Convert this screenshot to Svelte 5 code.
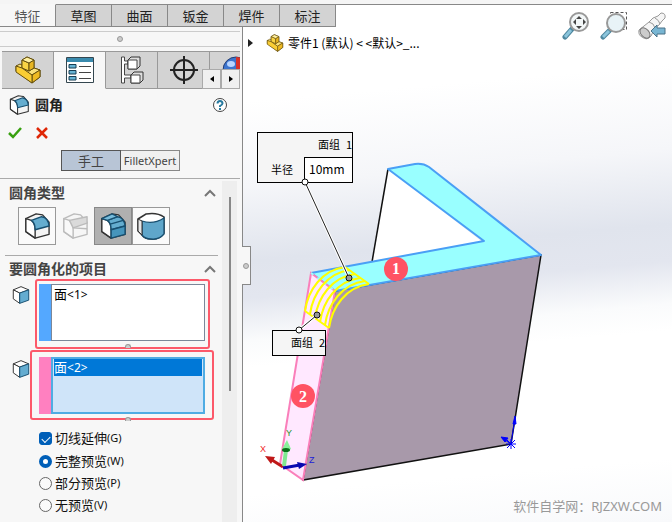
<script lang="ts">
  type CubeKind = "title" | "constant" | "variable" | "face" | "round" | "side";

  const ribbon = ["特征", "草图", "曲面", "钣金", "焊件", "标注"];
  const managers = ["part", "list", "config", "target", "display"];
  const types: { kind: CubeKind; label: string }[] = [
    { kind: "constant", label: "恒定大小圆角" },
    { kind: "variable", label: "变量大小圆角" },
    { kind: "face", label: "面圆角" },
    { kind: "round", label: "完整圆角" },
  ];
  const previews = [
    { value: "full", text: "完整预览", key: "(W)" },
    { value: "partial", text: "部分预览", key: "(P)" },
    { value: "none", text: "无预览", key: "(V)" },
  ];
  const strands = [[0, 0], [5, 3], [10, 7], [15, 11], [20, 14], [24, 17]];

  let activeRibbon = $state("特征");
  let activeManager = $state("list");
  let activeType = $state<CubeKind>("face");
  let tangent = $state(true);
  let preview = $state("full");
</script>

{#snippet part(size: number)}
  <svg width={size} height={size} viewBox="0 0 28 28" aria-hidden="true">
    <g stroke="#65500f" stroke-linejoin="round">
      <path d="M8 4 13 1 20 4 20 12 26 14 26 21 18 27 2 15 2 10 8 12Z" fill="#f6c62b" />
      <path d="M2 10 6 8 8 9V12L15 15 20 12 26 14 18 19Z" fill="#fbe27a" />
      <path d="M18 19V27L26 21V14Z" fill="#efba22" />
      <path d="M8 4V12L15 15V7Z" fill="#f9d445" />
      <path d="M15 7 20 4V12L15 15Z" fill="#e7b521" />
      <path d="M8 4 13 1 20 4 15 7Z" fill="#fff0a0" />
      <path d="M2 10V16L18 27V19L8 12Z" fill="#f9cd35" />
    </g>
  </svg>
{/snippet}

{#snippet cube(kind: CubeKind, size: number)}
  <svg class:faded={kind === "variable"} width={size} height={size} viewBox="0 0 28 28" aria-hidden="true">
    {#if kind === "round"}
      <path d="M1 7 9 2Q20 0 27 5V21Q22 28 14 27 8 27 5 23L1 19Z" fill="#fff" stroke="#333" stroke-width="1.5" />
      <path d="M5 9Q16 13 27 6V22Q22 28 14 27 8 27 5 23Z" fill="#5fa6ca" stroke="#174f70" stroke-width="1.3" />
      <path d="M5 9 1 7V19L5 23Z" fill="#e8e8e8" stroke="#333" />
    {:else if kind === "side"}
      <g stroke="#333" stroke-width="1.5" stroke-linejoin="round">
        <path d="M2 6 14 1 26 6 12 11Z" fill="#fff" />
        <path d="M2 6V20L12 27V11Z" fill="#fff" />
        <path d="M12 11V27L26 22V6Z" fill="#64acd0" stroke="#174f70" />
      </g>
    {:else}
      <g stroke="#333" stroke-width="1.5" stroke-linejoin="round">
        <path d="M2 6 13 1 20 2 27 10V23L12 27 2 20Z" fill="#f4f4f4" />
        <path d="M2 6V20L12 27V18Q12 11 8 8Z" fill="#fff" />
        {#if kind === "variable"}
          <path d="M8 8 27 4V11L12 16Z" fill="#999" />
          <path d="M12 16 27 17" />
        {:else}
          <path d="M8 8 19 4Q26 5 27 14L12 18Q12 11 8 8Z" fill="#65adcf" stroke="#174f70" />
          {#if kind === "face"}
            <path d="M12 18 27 14V23L12 27Z" fill="#4695bc" stroke="#174f70" />
            <path d="M2 6 13 1 19 4 8 8Z" fill="#79bddc" stroke="#174f70" />
            <path d="M11 12 25 8" stroke="#174f70" />
          {/if}
        {/if}
      </g>
    {/if}
  </svg>
{/snippet}

{#snippet managerIcon(name: string)}
  {#if name === "part"}
    {@render part(28)}
  {:else if name === "list"}
    <svg width="28" height="28" viewBox="0 0 28 28" aria-hidden="true">
      <path d="M.5 1.5H27.5V26.5H.5Z" fill="#fff" stroke="#34464f" />
      <path d="M1 2H27V6H1Z" fill="#398aad" />
      <path d="M3 8.500H10V12H3ZM3 14.500H10V18H3ZM3 20.500H10V24H3Z" fill="#65b2d3" stroke="#173d52" />
      <path d="M13 10.500H25M13 16.500H25M13 22.500H25" stroke="#444" />
    </svg>
  {:else if name === "config"}
    <svg width="28" height="28" viewBox="0 0 28 28" aria-hidden="true">
      <path d="M3.500 1V27H6.500V22H13V19H6.500V8H10V5H6.500V1Z" fill="#fff" stroke="#444" />
      <path d="M10 4 13 1H22V10L19 13H10ZM13 19 16 16H25V24L22 27H13Z" fill="#ddd" stroke="#333" />
      <path d="M10 4H19V13H10ZM13 19H22V27H13Z" fill="#fff" stroke="#444" />
    </svg>
  {:else if name === "target"}
    <svg width="28" height="28" viewBox="0 0 28 28" aria-hidden="true">
      <circle cx="14" cy="14" r="10" fill="none" stroke="#222" stroke-width="2" />
      <path d="M14 0V28M0 14H28" stroke="#222" stroke-width="2" />
    </svg>
  {:else}
    <svg width="28" height="28" viewBox="0 0 28 28" aria-hidden="true">
      <circle cx="14" cy="14" r="13" fill="#3c74ce" stroke="#243c70" />
      <path d="M14 14V1A13 13 0 0 1 27 14Z" fill="#d83128" />
      <ellipse cx="9" cy="8" rx="4" ry="3" fill="#b9d5ff" />
    </svg>
  {/if}
{/snippet}

{#snippet chevron()}
  <svg width="12" height="8" viewBox="0 0 12 8" aria-hidden="true">
    <path d="M1 7 6 2 11 7" fill="none" stroke="#777" stroke-width="2" />
  </svg>
{/snippet}

<div class="app">
  <header>
    <nav class="ribbon">
      {#each ribbon as name}
        <button class:active={activeRibbon === name} type="button" onclick={() => (activeRibbon = name)}>{name}</button>
      {/each}
    </nav>
    <div class="ribbon-rest"></div>
  </header>

  <main>
    <aside>
      <div class="grip"><i></i></div>
      <div class="managers">
        {#each managers as name}
          <button class:active={activeManager === name} type="button" aria-label={name} onclick={() => (activeManager = name)}>
            {@render managerIcon(name)}
          </button>
        {/each}
        <div class="pager">
          <button type="button" aria-label="向左"><svg width="4" height="6" viewBox="0 0 4 6"><path d="M4 0V6L0 3Z" /></svg></button>
          <button type="button" aria-label="向右"><svg width="4" height="6" viewBox="0 0 4 6"><path d="M0 0V6L4 3Z" /></svg></button>
        </div>
      </div>

      <div class="title">
        {@render cube("title", 20)}
        <h1>圆角</h1>
        <button class="plain" type="button" aria-label="帮助">
          <svg width="16" height="16" viewBox="0 0 16 16" aria-hidden="true">
            <circle cx="8" cy="8" r="6.500" fill="#fff" stroke="#444" />
            <path d="M5.500 6.500Q5.500 4 8 4T10.500 6.500Q10.500 7.500 8 9V10" fill="none" stroke="#287a9f" stroke-width="2" />
            <path d="M7 11H9V13H7Z" fill="#287a9f" />
          </svg>
        </button>
      </div>
      <div class="confirm">
        <button class="plain" type="button" aria-label="确定">
          <svg width="16" height="14" viewBox="0 0 16 14"><path d="M2 7 6 11 14 2" fill="none" stroke="#38a010" stroke-width="2.500" /></svg>
        </button>
        <button class="plain" type="button" aria-label="取消">
          <svg width="12" height="12" viewBox="0 0 12 12"><path d="M1 1 11 11M11 1 1 11" fill="none" stroke="#df2707" stroke-width="2.500" /></svg>
        </button>
      </div>
      <div class="mode">
        <button class="manual" type="button">手工</button>
        <button type="button">FilletXpert</button>
      </div>

      <div class="scroller">
        <div class="sections">
          <section>
            <h2>圆角类型 {@render chevron()}</h2>
            <div class="types">
              {#each types as type}
                <button
                  class:active={activeType === type.kind}
                  class:flat={type.kind === "variable"}
                  type="button"
                  aria-label={type.label}
                  onclick={() => (activeType = type.kind)}
                >
                  {@render cube(type.kind, type.kind === "round" ? 28 : 26)}
                </button>
              {/each}
            </div>
          </section>
          <section>
            <h2>要圆角化的项目 {@render chevron()}</h2>
            <div class="pick">
              {@render cube("side", 18)}
              <div class="frame">
                <div class="field blue">
                  <ul aria-label="面组 1"><li>面<small>&lt;1&gt;</small></li></ul>
                </div>
                <i></i>
              </div>
            </div>
            <div class="pick second">
              {@render cube("side", 18)}
              <div class="frame">
                <div class="field pink">
                  <ul aria-label="面组 2"><li>面<small>&lt;2&gt;</small></li></ul>
                </div>
                <i></i>
              </div>
            </div>
            <div class="options">
              <label class="tangent"><input type="checkbox" bind:checked={tangent} />切线延伸<small>(G)</small></label>
              {#each previews as option}
                <label><input type="radio" name="preview" value={option.value} bind:group={preview} />{option.text}<small>{option.key}</small></label>
              {/each}
            </div>
          </section>
        </div>
        <div class="track"><div class="thumb"></div></div>
      </div>
    </aside>

    <div class="viewport">
      <svg class="scene" viewBox="243 27 429 495" preserveAspectRatio="xMinYMin meet">
        <path d="M388 169 484 243 311 273 372 262Z" fill="#fff" />
        <path d="M388 169 372 262" stroke="#111" stroke-width="1.500" />
        <path d="M335 291 541 255 511 444 303 480Z" fill="#a899aa" stroke="#111" stroke-width="1.500" />
        <path d="M388 169 415 164Q423 163 429 167L541 255 335 291 311 273 484 241Z" fill="#99ffff" stroke="#4a9ff5" stroke-width="2" stroke-linejoin="round" />
        <path d="M311 273 335 291 303 480 280 464Z" fill="#ffe8ff" stroke="#fa7fba" stroke-width="2" />
        <path d="M311 273 335 291" stroke="#99ffff" stroke-width="2" stroke-dasharray="3 5" />
        <g fill="none" stroke="#ff0" stroke-width="2">
          {#each strands as [x, y]}
            <path d="M{305 + x} {311 + y}C{308 + x} {290 + y} {322 + x} {270 + y} {345 + x} {267 + y}" />
          {/each}
          <path d="M305 311 329 328M345 267 369 284" />
        </g>

        <path d="M305 182 349 278M299 330 317 315" stroke="#fff" stroke-width="3" />
        <path d="M305 182 349 278M299 330 317 315" stroke="#222" />
        <g stroke="#000" shape-rendering="crispEdges">
          <path d="M257.500 132.500H352.500V182.500H257.500Z" fill="#f5f5f5" />
          <path d="M304.500 157.500H352.500V182.500H304.500Z" fill="#fff" />
          <path d="M272.500 330.500H325.500V355.500H272.500Z" fill="#f5f5f5" />
        </g>
        <g stroke="#111">
          <circle cx="305" cy="182" r="3" fill="#fff" />
          <circle cx="299" cy="330" r="3" fill="#fff" />
          <circle cx="349" cy="278" r="3" fill="#999" />
          <circle cx="317" cy="315" r="3" fill="#999" />
        </g>
        <g class="callout">
          <text x="318" y="149">面组</text><text x="346" y="149">1</text>
          <text x="271" y="174">半径</text><text class="value" x="309" y="174">10mm</text>
          <text x="291" y="347">面组</text><text x="319" y="347">2</text>
        </g>
        <g class="badge">
          <circle cx="396" cy="269" r="12" /><text x="396" y="274">1</text>
          <circle cx="303" cy="396" r="12" /><text x="303" y="402">2</text>
        </g>

        <g class="axes">
          <path d="M283 467 272 460" stroke="#c01818" stroke-width="3" />
          <path d="M265 456 275 457 271 464Z" fill="#c01818" />
          <path d="M284 466 286 450" stroke="#80e890" stroke-width="4" />
          <path d="M287 440 291 449Q286 453 282 449Z" fill="#88f09a" />
          <ellipse cx="286" cy="450" rx="4" ry="2" fill="#087018" />
          <path d="M283 468 300 465" stroke="#0808b0" stroke-width="3" />
          <path d="M307 464 297 462 299 469Z" fill="#0808b0" />
          <text x="260" y="452" fill="#f02828">X</text>
          <text x="286" y="436" fill="#279227">Y</text>
          <text x="309" y="463" fill="#2020d8">Z</text>
        </g>
        <g stroke="#00f">
          <path d="M506 444H516M511 439V449M507 440 515 448M515 440 507 448M511 444 515 418M511 444 502 438" />
          <path d="M515 416 516 424H513ZM501 437 508 438 505 442Z" fill="#00f" />
        </g>
      </svg>

      <div class="viewbar">
        <div class="tree">
          <svg width="5" height="8" viewBox="0 0 5 8"><path d="M0 0V8L5 4Z" fill="#222" /></svg>
          {@render part(18)}
          <span>零件1 (默认) &lt; &lt;默认&gt;_...</span>
        </div>
        <div class="tools">
          <button class="plain" type="button" aria-label="整屏显示全图">
            <svg width="28" height="28" viewBox="0 0 28 28">
              <path d="M10 17 3 25" stroke="#4e879f" stroke-width="5" stroke-linecap="round" /><path d="M9 18 3 25" stroke="#8bc5dc" stroke-width="3" />
              <circle cx="17" cy="10" r="9" fill="#f3f7f8" stroke="#999" stroke-width="2" />
              <path d="M17 4 20 7H14ZM17 17 14 14H20ZM11 10 14 7V13ZM24 10 21 13V7Z" fill="#444" />
            </svg>
          </button>
          <button class="plain" type="button" aria-label="局部放大">
            <svg width="28" height="28" viewBox="0 0 28 28">
              <path d="M10.500 .5H26.500V17.500H10.500Z" fill="none" stroke="#555" stroke-dasharray="3 2" />
              <path d="M10 18 3 25" stroke="#4e879f" stroke-width="5" stroke-linecap="round" /><path d="M9 19 3 25" stroke="#8bc5dc" stroke-width="3" />
              <circle cx="16" cy="11" r="9" fill="#e8f3f7" stroke="#999" stroke-width="2" />
            </svg>
          </button>
          <button class="plain" type="button" aria-label="上一视图">
            <svg width="28" height="28" viewBox="0 0 28 28">
              <path d="M1 18 11 10 15 6 20 4 23 1Q28 1 27 6L24 9 21 13 17 16 13 24Q9 29 4 25 0 23 1 18Z" fill="#f5f5f5" stroke="#999" />
              <path d="M11 10Q16 11 17 16M17 6Q21 8 22 12" fill="none" stroke="#999" />
              <ellipse cx="7" cy="21" rx="4" ry="6" transform="rotate(-42 7 21)" fill="#ccc" stroke="#777" />
              <path d="M13 19 19 13V16H27V22H19V25Z" fill="#78b5d2" stroke="#4b7187" />
            </svg>
          </button>
        </div>
      </div>
      <div class="splitter"><i></i></div>
      <p class="credit">软件自学网：RJZXW.COM</p>
    </div>
  </main>
</div>

<style>
  :global(body) {
    background: #f7f7f7;
  }

  .app {
    display: flex;
    flex-direction: column;
    min-height: 100vh;
    color: #222;
    font: 13px/16px "Noto Sans", "Noto Sans CJK SC", sans-serif;
  }

  .app * {
    box-sizing: border-box;
  }

  svg {
    display: block;
    flex: none;
  }

  button {
    margin: 0;
    padding: 0;
    color: inherit;
    font: inherit;
  }

  .plain {
    border: 0;
    background: none;
  }

  header {
    display: flex;
    height: 27px;
    padding-top: 4px;
    background: #f5f5f5;
  }

  .ribbon {
    display: flex;
  }

  .ribbon button {
    width: 56px;
    border: 1px solid #888;
    border-left: 0;
    background: #d3d3d3;
  }

  .ribbon button.active {
    border-top-color: transparent;
    background: #f7f7f7;
    color: #555;
  }

  .ribbon-rest {
    flex: 1;
    border-top: 1px solid #888;
    background: #fff;
  }

  main {
    display: flex;
    flex: 1;
  }

  aside {
    display: flex;
    flex: none;
    flex-direction: column;
    width: 243px;
    border-right: 1px solid #888;
    background: #f7f7f7;
  }

  i {
    display: block;
    width: 6px;
    height: 6px;
    border: 1px solid #999;
    border-radius: 50%;
    background: #ccc;
  }

  .grip {
    display: grid;
    height: 16px;
    margin: 4px 2px 4px 0;
    border: 1px solid #ccc;
    border-width: 1px 0;
    place-items: center;
  }

  .managers {
    position: relative;
    display: flex;
    overflow: hidden;
    height: 38px;
    margin: 0 2px;
  }

  .managers > button {
    display: grid;
    flex: none;
    width: 52px;
    border: 1px solid #999;
    border-left: 0;
    background: #d3d3d3;
    place-items: center;
  }

  .managers > button.active {
    border-bottom-color: transparent;
    background: #f7f7f7;
  }

  .pager {
    position: absolute;
    right: 0;
    bottom: 0;
    display: flex;
    height: 20px;
  }

  .pager button {
    display: grid;
    width: 19px;
    border: 1px solid #aaa;
    background: #f0f0f0;
    place-items: center;
  }

  .title {
    display: flex;
    align-items: center;
    height: 32px;
    padding: 0 14px 0 9px;
    gap: 6px;
  }

  h1,
  h2 {
    flex: 1;
    margin: 0;
    font-size: 14px;
    font-weight: 700;
    line-height: 20px;
  }

  .confirm {
    display: flex;
    align-items: center;
    height: 24px;
    padding-left: 7px;
    gap: 13px;
  }

  .mode {
    display: flex;
    width: 119px;
    height: 21px;
    margin: 5px 0 7px 61px;
  }

  .mode button {
    width: 59px;
    border: 1px solid #888;
    border-left: 0;
    background: #f0f0f0;
    color: #444;
    font-size: 11px;
    line-height: 16px;
  }

  .mode .manual {
    width: 60px;
    border: 1px solid #555;
    background: #b8c5d6;
    font-size: 13px;
  }

  .scroller {
    display: flex;
    flex: 1;
    margin-right: 2px;
    border-top: 1px solid #aaa;
  }

  .sections {
    flex: 1;
    padding: 0 4px 0 5px;
  }

  .track {
    width: 15px;
    margin: 2px 3px 0 0;
    padding: 16px 6px 0 7px;
    background: #eee;
  }

  .thumb {
    width: 2px;
    height: 194px;
    background: #888;
  }

  section + section {
    border-top: 1px solid #aaa;
    padding-top: 3px;
  }

  section {
    padding-top: 4px;
  }

  h2 {
    display: flex;
    align-items: center;
    justify-content: space-between;
    padding: 0 2px 0 4px;
    color: #444;
  }

  .types {
    display: flex;
    margin: 4px 0 10px 13px;
  }

  .types button {
    display: grid;
    width: 38px;
    height: 38px;
    border: 1px solid #999;
    background: #fafafa;
    place-items: center;
  }

  .types .flat {
    border-color: transparent;
    background: none;
  }

  .types .active {
    border-color: #888;
    background: #b0b0b0;
  }

  .faded {
    opacity: .3;
  }

  .pick {
    display: flex;
    padding: 0 8px 0 7px;
  }

  .pick > :global(svg) {
    margin-top: 7px;
  }

  .pick.second > :global(svg) {
    margin-top: 11px;
  }

  .frame {
    flex: 1;
    height: 70px;
    margin-left: 5px;
    border: 2px solid #fc596a;
    border-radius: 3px;
    padding: 3px 3px 0 2px;
  }

  .second {
    padding-right: 4px;
  }

  .second .frame {
    margin-top: 1px;
    margin-left: 0;
    padding: 5px 7px 0;
  }

  .frame i {
    height: 4px;
    margin: 3px auto 0;
    border-bottom: 0;
    border-radius: 3px 3px 0 0;
    translate: 6px;
  }

  .field {
    display: flex;
    height: 57px;
  }

  .field::before {
    width: 12px;
    background: #54a8ff;
    content: "";
  }

  .pink::before {
    background: #ff80c0;
  }

  ul {
    flex: 1;
    margin: 0;
    border: 1px solid #7b8799;
    padding: 1px 2px;
    background: #fff;
    color: #000;
    list-style: none;
  }

  .pink ul {
    border: 2px solid #50ace3;
    padding: 0 1px;
    background: #cfe4f9;
  }

  .pink li {
    background: #0078d7;
    color: #fff;
  }

  small {
    font-size: 11px;
  }

  li small {
    font-size: 12px;
  }

  .options {
    display: grid;
    margin: 8px 0 0 34px;
    color: #111;
  }

  label {
    display: flex;
    align-items: center;
    height: 22px;
  }

  .tangent {
    height: 24px;
    margin-top: -2px;
  }

  input {
    width: 13px;
    height: 13px;
    margin: 0 3px 0 0;
    border: 1px solid #666;
    border-radius: 50%;
    appearance: none;
    background: #fafafa;
  }

  input[type="checkbox"] {
    display: grid;
    border-radius: 3px;
    place-items: center;
  }

  input[type="checkbox"]:checked {
    border-color: #005fb8;
    background: #005fb8;
  }

  input[type="checkbox"]:checked::before {
    width: 7px;
    height: 4px;
    border: solid #fff;
    border-width: 0 0 1px 1px;
    transform: rotate(-45deg);
    content: "";
  }

  input[type="radio"]:checked {
    border: 4px solid #005fb8;
    background: #fff;
  }

  .viewport {
    position: relative;
    flex: 1;
    min-width: 0;
    background: linear-gradient(175deg, #fff 14%, #f5f6f9 30%, #e0e4ed 44%, #e3e6ef 51%, #fafbfc 59%, #fff 64%, #fff 88%, #f8f9fb);
  }

  .scene {
    position: absolute;
    width: 100%;
    height: 100%;
  }

  .callout {
    font: 11px "Noto Sans CJK SC", sans-serif;
  }

  .callout .value {
    font: 12px "Noto Sans CJK SC", sans-serif;
  }

  .badge {
    fill: #ff5263;
    font: bold 16px "Liberation Serif", serif;
    text-anchor: middle;
  }

  .badge text {
    fill: #fff;
  }

  .axes text {
    font: 9px "Liberation Sans", sans-serif;
  }

  .viewbar {
    position: relative;
    display: flex;
    justify-content: space-between;
    padding-left: 5px;
  }

  .tree {
    display: flex;
    align-items: center;
    height: 31px;
    color: #000;
    font: 12px/16px "Noto Sans CJK SC", sans-serif;
  }

  .tree :global(svg + svg) {
    margin: 0 4px 0 13px;
  }

  .tools {
    display: flex;
    align-items: flex-start;
    margin: -15px 6px 0 0;
    gap: 10px;
  }

  .splitter {
    position: absolute;
    top: 219px;
    left: -1px;
    display: grid;
    width: 9px;
    height: 39px;
    border: 1px solid #888;
    border-left: 0;
    background: #f7f7f7;
    place-items: center;
  }

  .credit {
    position: absolute;
    right: 10px;
    bottom: 8px;
    margin: 0;
    color: #999;
  }
</style>
